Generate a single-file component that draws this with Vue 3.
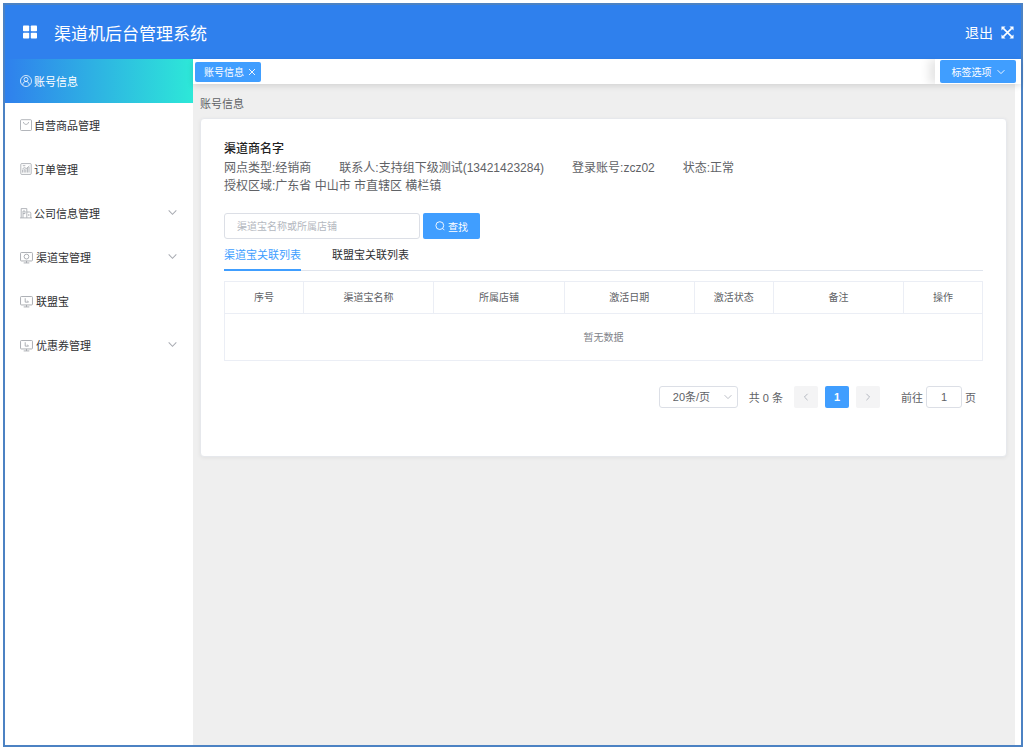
<script setup>
import { ref } from 'vue'

const menu = [
  { label: '账号信息', icon: 'user', active: true },
  { label: '自营商品管理', icon: 'goods' },
  { label: '订单管理', icon: 'order' },
  { label: '公司信息管理', icon: 'company', sub: true },
  { label: '渠道宝管理', icon: 'camera', sub: true, wide: true },
  { label: '联盟宝', icon: 'screen', wide: true },
  { label: '优惠券管理', icon: 'screen', sub: true, wide: true }
]

const columns = [
  { label: '序号', small: true },
  { label: '渠道宝名称' },
  { label: '所属店铺' },
  { label: '激活日期' },
  { label: '激活状态', small: true },
  { label: '备注' },
  { label: '操作', small: true }
]

const keyword = ref('')
const pageSize = ref('20')
const page = ref('1')
</script>

<template>
  <div class="frame">
    <header class="header">
      <svg class="logo" viewBox="0 0 14 14" aria-hidden="true">
        <rect x="0" y="0.5" width="6.2" height="5.8" rx="0.8" />
        <rect x="7.8" y="0.5" width="6.2" height="5.8" rx="0.8" />
        <rect x="0" y="7.7" width="6.2" height="5.8" rx="0.8" />
        <rect x="7.8" y="7.7" width="6.2" height="5.8" rx="0.8" />
      </svg>
      <h1 class="title">渠道机后台管理系统</h1>
      <button class="logout" type="button">退出</button>
      <button class="full" type="button" aria-label="全屏">
        <svg viewBox="0 0 14 14">
          <path d="M2.5 2.5l9 9M11.5 2.5l-9 9" stroke="#fff" stroke-width="1.7" />
          <path d="M.5.5h4.4L.5 4.9zM13.5.5v4.4L9.1.5zM.5 13.5V9.1l4.4 4.4zM13.5 13.5H9.1l4.4-4.4z" fill="#fff" />
        </svg>
      </button>
    </header>

    <div class="body">
      <nav class="sidebar">
        <a
          v-for="item in menu"
          :key="item.label"
          href="#"
          class="item"
          :class="{ active: item.active, wide: item.wide }"
        >
          <svg class="icon" viewBox="0 0 12 12" aria-hidden="true">
            <g v-if="item.icon === 'user'">
              <circle cx="6" cy="6" r="5.5" />
              <circle cx="6" cy="4.4" r="2" />
              <path d="M2.9 10.2V9.5c0-2 1.4-3 3.1-3s3.1 1 3.1 3v.7" />
            </g>
            <g v-else-if="item.icon === 'goods'">
              <rect x="0.5" y="0.7" width="11" height="10.8" rx="1" />
              <path d="M3.4 3c.4 3.2 4.8 3.2 5.2 0" />
            </g>
            <g v-else-if="item.icon === 'order'">
              <rect x="0.8" y="0.6" width="10.4" height="10.8" rx="0.8" />
              <path d="M2.8 2.7h2.5M2.6 9.6V6.6M4.2 9.6V5.8M5.8 9.6V6.4M7.4 9.6V5M9 9.6V4" />
              <path d="M2.6 5.6l2.2-1 1.4 1L9.4 3" />
            </g>
            <g v-else-if="item.icon === 'company'">
              <path d="M1.2 10.8V1.6h5.6v9.2M0 10.9h12M6.8 5h2.6c1 0 1.4.5 1.4 1.4v4.4M3 10.8V4h2v2.6H3M8.8 7v2" />
            </g>
            <g v-else>
              <rect x="0.5" y="1.4" width="11" height="7.8" rx="0.8" />
              <path d="M3.4 11h5.2M6 9.2V11" />
              <circle v-if="item.icon === 'camera'" cx="6" cy="5.2" r="2.2" />
              <path v-else d="M4.8 3v3.6h3M6.8 5.2l1 1.4" />
            </g>
          </svg>
          <span>{{ item.label }}</span>
          <svg v-if="item.sub" class="arrow" viewBox="0 0 8 8" aria-hidden="true">
            <path d="M.6 2.2L4 5.6l3.4-3.4" />
          </svg>
        </a>
      </nav>

      <main class="main">
        <div class="tagbar">
          <div class="tags">
            <span class="tag">
              账号信息
              <button type="button" class="close" aria-label="关闭">
                <svg viewBox="0 0 8 8"><path d="M1 1l6 6M7 1L1 7" /></svg>
              </button>
            </span>
          </div>
          <div class="options">
            <button type="button" class="optbtn">
              标签选项
              <svg viewBox="0 0 8 8"><path d="M.6 2.2L4 5.6l3.4-3.4" /></svg>
            </button>
          </div>
        </div>

        <div class="content">
          <div class="crumb">账号信息</div>
          <section class="card">
            <h2 class="name">渠道商名字</h2>
            <div class="info">
              <span>网点类型:经销商</span>
              <span>联系人:支持组下级测试(13421423284)</span>
              <span>登录账号:zcz02</span>
              <span>状态:正常</span>
            </div>
            <div class="info">授权区域:广东省 中山市 市直辖区 横栏镇</div>

            <form class="search" @submit.prevent>
              <input v-model="keyword" type="text" placeholder="渠道宝名称或所属店铺" aria-label="渠道宝名称或所属店铺" />
              <button type="submit">
                <svg viewBox="0 0 10 10"><circle cx="4.8" cy="4.6" r="3.9" /><path d="M7.6 7.4l1.8 1.8" /></svg>
                查找
              </button>
            </form>

            <div class="tabs">
              <button type="button" class="tab on">渠道宝关联列表</button>
              <button type="button" class="tab">联盟宝关联列表</button>
            </div>

            <table class="table">
              <thead>
                <tr>
                  <th v-for="c in columns" :key="c.label" :class="{ small: c.small }">{{ c.label }}</th>
                </tr>
              </thead>
              <tbody>
                <tr>
                  <td :colspan="columns.length">暂无数据</td>
                </tr>
              </tbody>
            </table>

            <div class="pager">
              <div class="size">
                <select v-model="pageSize" aria-label="每页条数">
                  <option value="20">20条/页</option>
                  <option value="50">50条/页</option>
                </select>
                <svg viewBox="0 0 8 8"><path d="M.6 2.2L4 5.6l3.4-3.4" /></svg>
              </div>
              <span class="total">共 0 条</span>
              <button type="button" class="pg" disabled aria-label="上一页">
                <svg viewBox="0 0 8 8"><path d="M5.6.8L2.4 4l3.2 3.2" /></svg>
              </button>
              <button type="button" class="pg cur">1</button>
              <button type="button" class="pg" disabled aria-label="下一页">
                <svg viewBox="0 0 8 8"><path d="M2.4.8L5.6 4 2.4 7.2" /></svg>
              </button>
              <label class="jump">前往<input v-model="page" type="text" />页</label>
            </div>
          </section>
        </div>
      </main>
    </div>
  </div>
</template>

<style>
html,
body,
#app {
  height: 100%;
}
body {
  background: #fff;
}
#app {
  box-sizing: border-box;
  display: flex;
  flex-direction: column;
  padding: 3px 1px 4px 3px;
}
</style>

<style scoped>
* {
  box-sizing: border-box;
}
.frame {
  flex: 1 0 auto;
  display: flex;
  flex-direction: column;
  border: 2px solid #4c82c3;
  font-family: "Liberation Sans", "Noto Sans CJK SC", sans-serif;
  font-size: 11px;
  color: #606266;
}
button,
input,
select {
  font-family: inherit;
  margin: 0;
  padding: 0;
  border: 0;
  outline: none;
}
button {
  background: none;
  cursor: pointer;
}
svg {
  display: block;
  flex: none;
}
.header {
  display: flex;
  align-items: center;
  height: 54px;
  padding: 0 7px 0 18px;
  background: #2f80ed;
  color: #fff;
}
.logo {
  width: 14px;
  height: 14px;
  fill: #fff;
}
.title {
  flex: 1;
  margin: 0 0 0 17px;
  font-size: 17px;
  font-weight: 400;
}
.logout {
  color: #fff;
  font-size: 14px;
  margin-right: 8px;
}
.full svg {
  width: 13px;
  height: 13px;
}
.body {
  flex: 1;
  display: flex;
}
.sidebar {
  flex: none;
  width: 188px;
  background: #fff;
}
.item {
  display: flex;
  align-items: center;
  height: 44px;
  padding: 0 16px 0 15px;
  color: #303133;
  text-decoration: none;
}
.item span {
  flex: 1;
  margin-left: 2px;
}
.item.wide span {
  margin-left: 3px;
}
.item.active {
  background: linear-gradient(90deg, #2f80ed, #2de8d8);
  color: #fff;
}
.icon {
  width: 12px;
  height: 12px;
  fill: none;
  stroke: #a0a3a9;
  stroke-width: 0.8;
}
.wide .icon {
  width: 13px;
  height: 13px;
}
.active .icon {
  stroke: #fff;
}
.arrow {
  width: 9px;
  height: 9px;
  margin-bottom: 2px;
  fill: none;
  stroke: #a8abb2;
  stroke-width: 0.9;
}
.main {
  flex: 1;
  min-width: 0;
  display: flex;
  flex-direction: column;
}
.tagbar {
  display: flex;
  height: 25px;
  background: #fff;
  box-shadow: 0 2px 6px rgba(0, 0, 0, 0.12);
  position: relative;
}
.tags {
  flex: 1;
  display: flex;
  align-items: center;
  padding-left: 2px;
  overflow: hidden;
}
.tag {
  display: flex;
  align-items: center;
  gap: 4px;
  height: 20px;
  padding: 0 5px 0 9px;
  border-radius: 2px;
  background: #409eff;
  color: #fff;
  font-size: 10px;
}
.close svg {
  width: 8px;
  height: 8px;
  stroke: #fff;
  stroke-width: 0.9;
}
.options {
  display: flex;
  align-items: center;
  padding: 0 5px;
  box-shadow: -6px 0 10px rgba(0, 0, 0, 0.1);
  clip-path: inset(0 0 0 -20px);
}
.optbtn {
  display: flex;
  align-items: center;
  justify-content: center;
  gap: 5px;
  width: 76px;
  height: 23px;
  border-radius: 2px;
  background: #409eff;
  color: #fff;
  font-size: 10px;
}
.optbtn svg {
  width: 8px;
  height: 8px;
  fill: none;
  stroke: #fff;
  stroke-width: 0.9;
}
.content {
  flex: 1;
  margin-right: 6px;
  padding: 10px 8px 10px 7px;
  background: #efefef;
}
.crumb {
  height: 20px;
  line-height: 20px;
}
.card {
  margin-top: 4px;
  padding: 20px 23px 48px;
  background: #fff;
  border: 1px solid #e6e8ec;
  border-radius: 4px;
  box-shadow: 0 1px 4px rgba(0, 0, 0, 0.06);
}
.name {
  margin: 0;
  height: 20px;
  line-height: 20px;
  font-size: 12px;
  font-weight: 500;
  color: #222;
}
.info {
  display: flex;
  gap: 28px;
  height: 18px;
  line-height: 18px;
  font-size: 12px;
  white-space: nowrap;
}
.search {
  display: flex;
  gap: 3px;
  margin-top: 18px;
}
.search input {
  width: 196px;
  height: 26px;
  padding: 0 12px;
  border: 1px solid #dcdfe6;
  border-radius: 3px;
  font-size: 10px;
  color: #606266;
}
.search input::placeholder {
  color: #b4b8c0;
}
.search button {
  display: flex;
  align-items: center;
  justify-content: center;
  gap: 3px;
  width: 57px;
  height: 26px;
  border-radius: 2px;
  background: #409eff;
  color: #fff;
  font-size: 10px;
}
.search svg {
  width: 10px;
  height: 10px;
  fill: none;
  stroke: #fff;
  stroke-width: 0.9;
}
.tabs {
  display: flex;
  gap: 31px;
  height: 32px;
  box-shadow: inset 0 -1px #dfe4ed;
}
.tab {
  height: 32px;
  font-size: 11px;
  color: #303133;
  border-bottom: 2px solid transparent;
}
.tab.on {
  color: #409eff;
  border-color: #409eff;
}
.table {
  width: 100%;
  margin-top: 10px;
  table-layout: fixed;
  border-collapse: collapse;
  font-size: 10px;
  text-align: center;
}
.table th,
.table td {
  padding: 0 0 2px;
  border: 1px solid #ebeef5;
}
.table th {
  width: 17.2%;
  height: 32px;
  font-weight: 400;
  color: #606266;
}
.table th.small {
  width: 10.4%;
}
.table td {
  height: 47px;
  color: #808389;
}
.pager {
  display: flex;
  align-items: center;
  justify-content: flex-end;
  margin-top: 25px;
  padding-right: 7px;
}
.size {
  position: relative;
}
.size select {
  display: block;
  appearance: none;
  width: 79px;
  height: 22px;
  padding-left: 13px;
  border: 1px solid #dcdfe6;
  border-radius: 3px;
  background: #fff;
  color: #606266;
  font-size: 11px;
}
.size svg {
  position: absolute;
  right: 6px;
  top: 7px;
  width: 8px;
  height: 8px;
  fill: none;
  stroke: #b4b8c0;
  stroke-width: 0.9;
  pointer-events: none;
}
.total {
  margin: 0 11px;
}
.pg {
  display: flex;
  align-items: center;
  justify-content: center;
  width: 24px;
  height: 22px;
  border-radius: 2px;
  background: #f4f4f5;
}
.pg + .pg {
  margin-left: 7px;
}
.pg svg {
  width: 8px;
  height: 8px;
  fill: none;
  stroke: #b4b8c0;
}
.pg.cur {
  background: #409eff;
  color: #fff;
  font-size: 11px;
  font-weight: 700;
}
.jump {
  display: flex;
  align-items: center;
  margin-left: 21px;
}
.jump input {
  width: 36px;
  height: 22px;
  margin: 0 3px;
  border: 1px solid #dcdfe6;
  border-radius: 3px;
  color: #606266;
  font-size: 11px;
  text-align: center;
}
</style>
